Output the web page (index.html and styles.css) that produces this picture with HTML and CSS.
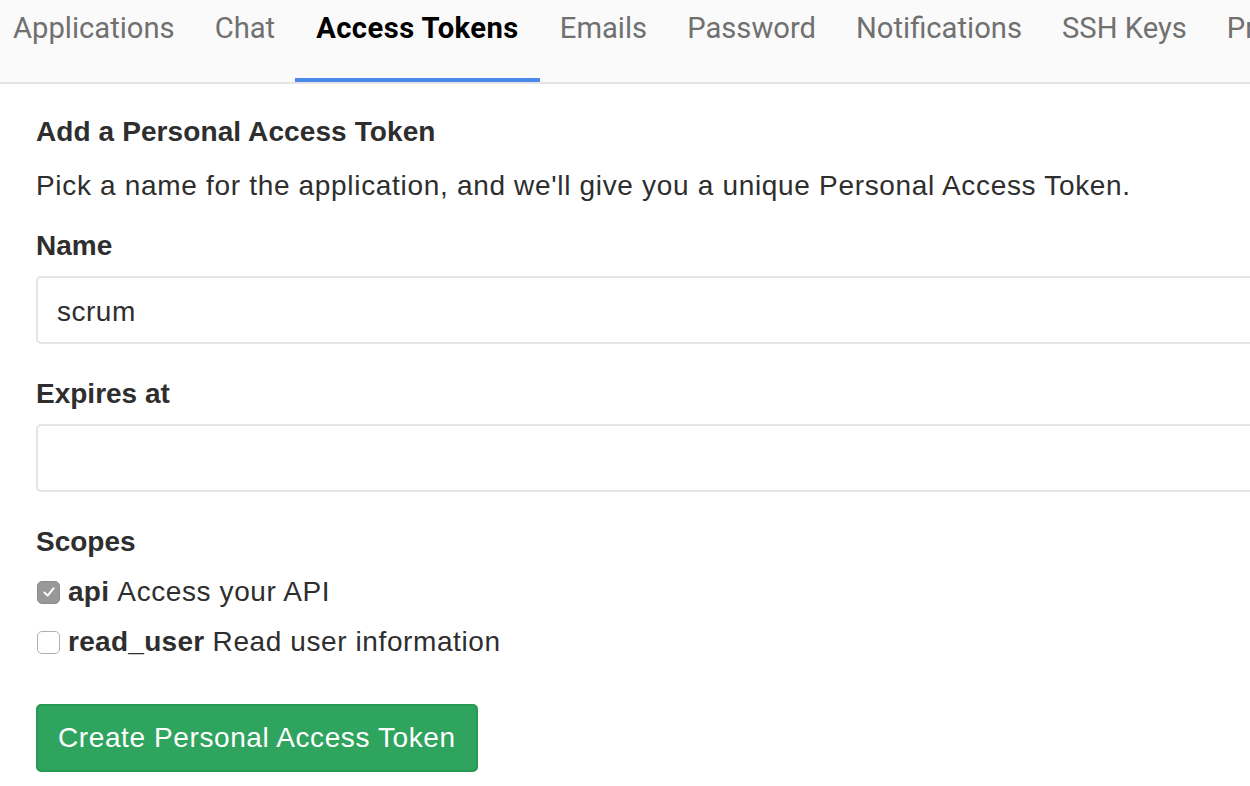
FILE: index.html
```html
<!DOCTYPE html>
<html>
<head>
<meta charset="utf-8">
<link rel="stylesheet" href="styles.css">
</head>
<body>
<nav class="tabs">
  <ul class="tab-list">
    <li class="tab">Applications</li>
    <li class="tab">Chat</li>
    <li class="tab active">Access Tokens</li>
    <li class="tab">Emails</li>
    <li class="tab">Password</li>
    <li class="tab">Notifications</li>
    <li class="tab">SSH Keys</li>
    <li class="tab">Preferences</li>
  </ul>
</nav>
<main class="content">
  <h4 class="title">Add a Personal Access Token</h4>
  <p class="lead">Pick a name for the application, and we'll give you a unique Personal Access Token.</p>
  <form class="form">
    <div class="field">
      <label class="label">Name</label>
      <input class="input" type="text" value="scrum">
    </div>
    <div class="field">
      <label class="label">Expires at</label>
      <input class="input" type="text" value="">
    </div>
    <div class="field scopes">
      <label class="label">Scopes</label>
      <label class="scope"><span class="box checked"><svg viewBox="0 0 22 22" width="20" height="20"><path d="M6 11.5 L9.5 15 L16 7" fill="none" stroke="#fff" stroke-width="2.2" stroke-linecap="round" stroke-linejoin="round"/></svg></span><b>api</b> Access your API</label>
      <label class="scope"><span class="box"></span><b>read_user</b> Read user information</label>
    </div>
    <div class="actions">
      <button type="button" class="btn-create">Create Personal Access Token</button>
    </div>
  </form>
</main>
</body>
</html>
```
FILE: styles.css
```css
html, body {
  margin: 0;
  padding: 0;
  background: #fff;
  overflow: hidden;
}
body {
  font-family: "Liberation Sans", Arial, sans-serif;
  color: #2e2e2e;
  width: 1250px;
  height: 786px;
}
.tabs {
  background: #fafafa;
  border-bottom: 2px solid #e5e5e5;
  height: 82px;
  overflow: hidden;
}
.tab-list {
  list-style: none;
  margin: 0 0 0 -8px;
  padding: 0;
  display: flex;
  white-space: nowrap;
  height: 82px;
}
.tab {
  padding: 0 20px;
  font-family: Roboto, "Liberation Sans", sans-serif;
  font-size: 29.2px;
  line-height: 56px;
  color: #707070;
  height: 82px;
  box-sizing: border-box;
}
.tab:first-child { padding-left: 21px; }
.tab.active {
  color: #000;
  font-weight: bold;
  letter-spacing: 0.45px;
  padding: 0 21px;
  box-shadow: inset 0 -4px 0 #4a8be9;
}
.content {
  padding: 31px 0 0 36px;
}
.title {
  margin: 0;
  font-size: 28px;
  font-weight: bold;
  line-height: 34px;
  letter-spacing: 0.1px;
}
.lead {
  margin: 20px 0 0;
  font-size: 28px;
  line-height: 34px;
  letter-spacing: 0.68px;
}
.form { margin-top: 26px; width: 1240px; }
.field { display: flex; flex-direction: column; }
.label {
  font-weight: bold;
  font-size: 28px;
  line-height: 34px;
  margin-bottom: 13px;
}
.input {
  box-sizing: border-box;
  height: 68px;
  border: 2px solid #e5e5e5;
  border-radius: 5px;
  font-family: inherit;
  font-size: 28px;
  letter-spacing: 0.5px;
  color: #2e2e2e;
  padding: 4px 19px 0;
  margin-bottom: 33px;
  outline: none;
}
.scopes .label { margin-bottom: 8px; }
.scope {
  display: flex;
  align-items: center;
  font-size: 28px;
  line-height: 34px;
  height: 50px;
  letter-spacing: 0.6px;
}
.scope b { margin-right: 8px; letter-spacing: 0.3px; }
.box {
  width: 23px;
  height: 23px;
  box-sizing: border-box;
  border: 1px solid #b0b0b0;
  border-radius: 5px;
  background: #fff;
  margin: 0 8px 0 1px;
  display: inline-flex;
  align-items: center;
  justify-content: center;
}
.box.checked {
  background: #989898;
  border-color: #8c8c8c;
}
.actions { margin-top: 37px; }
.btn-create {
  background: #2ea45e;
  border: 2px solid #289855;
  border-radius: 5px;
  color: #fff;
  font-family: inherit;
  font-size: 28px;
  letter-spacing: 0.6px;
  height: 68px;
  padding: 0 20px;
  cursor: pointer;
}
```
